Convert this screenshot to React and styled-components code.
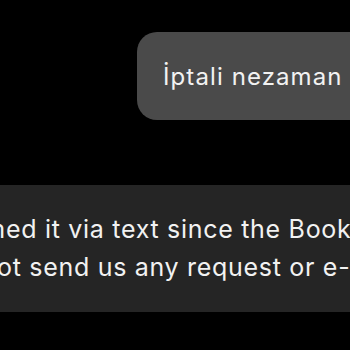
import React from 'react';
import styled, { createGlobalStyle } from 'styled-components';

const GlobalStyle = createGlobalStyle`
  html, body {
    margin: 0;
    padding: 0;
    background: #000;
    overflow: hidden;
  }
  body {
    font-family: Inter, "Noto Sans", "Liberation Sans", sans-serif;
    color: #f2f2f2;
  }
`;

const Thread = styled.div`
  width: 350px;
  height: 350px;
  overflow: hidden;
  display: flex;
  flex-direction: column;
  gap: 65px;
  padding-top: 32px;
  box-sizing: border-box;
`;

const Row = styled.div`
  display: flex;
  padding-left: ${(p) => p.$indent || 0}px;
`;

const SentBubble = styled.div`
  background: #4a4a4a;
  border-radius: 20px;
  height: 88px;
  padding: 0 26px;
  display: flex;
  align-items: center;
  font-size: 24px;
  letter-spacing: 1.1px;
  white-space: nowrap;
  flex-shrink: 0;
`;

const ReceivedBubble = styled.div`
  background: #252525;
  width: 100%;
  padding: 25px 0 26px;
  box-sizing: border-box;
  overflow: hidden;
`;

const Line = styled.div`
  font-size: 25px;
  line-height: 38px;
  letter-spacing: 0.7px;
  white-space: nowrap;
  margin-left: ${(p) => p.$offset}px;
`;

export default function App() {
  return (
    <>
      <GlobalStyle />
      <Thread>
        <Row $indent={137}>
          <SentBubble>İptali nezaman</SentBubble>
        </Row>
        <ReceivedBubble>
          <Line $offset={-90}>confirmed it via text since the Booking.com</Line>
          <Line $offset={-65}>did not send us any request or e-mail</Line>
        </ReceivedBubble>
      </Thread>
    </>
  );
}
